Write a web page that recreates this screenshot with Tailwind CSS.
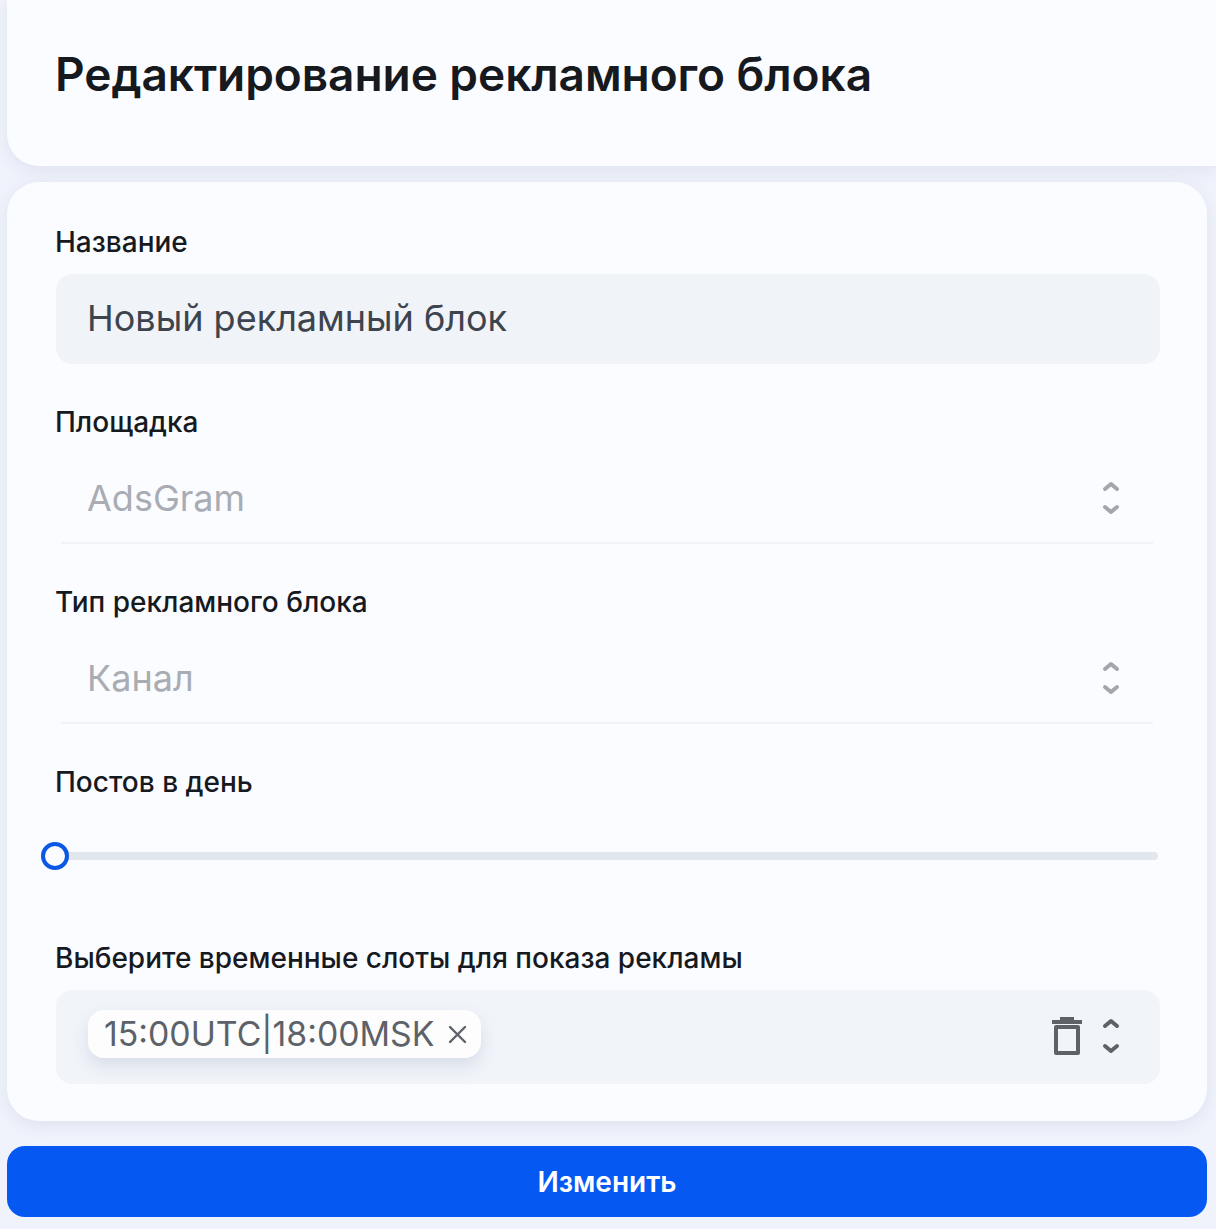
<!DOCTYPE html>
<html lang="ru">
<head>
    <meta charset="UTF-8">
    <meta name="viewport" content="width=device-width, initial-scale=1.0">
    <title>Редактирование рекламного блока</title>
    <script src="https://cdn.jsdelivr.net/npm/@tailwindcss/browser@4"></script>
</head>
<body class="bg-[#f0f3fb] font-['Inter',sans-serif] h-[1229px] overflow-hidden">
    <main class="pl-[7px] flex flex-col">
        <!-- header -->
        <div class="h-[166px] bg-[#fbfcff] rounded-bl-[32px] pl-[48px] pt-[44px] shadow-[0_4px_16px_rgba(170,180,210,0.25)]">
            <h1 class="text-[46px] leading-[60px] font-semibold text-[#16191d] tracking-[-0.06px]">Редактирование рекламного блока</h1>
        </div>

        <!-- form card -->
        <div class="mt-[16px] w-[1200px] h-[939px] bg-[#fbfcff] rounded-[32px] px-[49px] pt-[42px] shadow-[0_4px_16px_rgba(170,180,210,0.25)]">
            <label class="block -ml-[1px] text-[28px] leading-[36px] font-medium text-[#16191d] h-[50px]">Название</label>
            <div class="w-[1104px] h-[90px] rounded-[16px] bg-[#f0f3f8] pl-[31px] pb-[2px] flex items-center text-[36px] text-[#3d444d]">Новый рекламный блок</div>

            <label class="block -ml-[1px] mt-[40px] text-[28px] leading-[36px] font-medium text-[#16191d] h-[50px]">Площадка</label>
            <div class="w-[1104px] h-[88px] pl-[31px] pr-[29px] flex items-center justify-between text-[36px] text-[#a9adb3]">
                <span>AdsGram</span>
                <svg class="w-[40px] h-[40px]" viewBox="0 0 40 40" fill="none" stroke="#a3a6ac" stroke-width="4" stroke-linecap="round" stroke-linejoin="round"><path d="M14 11l6-5 6 5"/><path d="M14 29l6 5 6-5"/></svg>
            </div>
            <div class="h-[2px] mx-[5px] bg-[#f0f2f6]"></div>

            <label class="block -ml-[1px] mt-[40px] text-[28px] leading-[36px] font-medium text-[#16191d] h-[50px]">Тип рекламного блока</label>
            <div class="w-[1104px] h-[88px] pl-[31px] pr-[29px] flex items-center justify-between text-[36px] text-[#a9adb3]">
                <span>Канал</span>
                <svg class="w-[40px] h-[40px]" viewBox="0 0 40 40" fill="none" stroke="#a3a6ac" stroke-width="4" stroke-linecap="round" stroke-linejoin="round"><path d="M14 11l6-5 6 5"/><path d="M14 29l6 5 6-5"/></svg>
            </div>
            <div class="h-[2px] mx-[5px] bg-[#f0f2f6]"></div>

            <label class="block -ml-[1px] mt-[40px] text-[28px] leading-[36px] font-medium text-[#16191d] h-[50px]">Постов в день</label>
            <div class="relative w-[1104px] h-[84px] flex items-center">
                <div class="w-[1102px] h-[8px] rounded-full bg-[#e2e7ed]"></div>
                <div class="absolute left-[-15px] top-[28px] w-[28px] h-[28px] rounded-full border-[4px] border-[#0a58e6] bg-[#fbfcff]"></div>
            </div>

            <label class="block -ml-[1px] mt-[42px] text-[28px] leading-[36px] font-medium text-[#16191d] h-[50px]">Выберите временные слоты для показа рекламы</label>
            <div class="w-[1104px] h-[94px] rounded-[16px] bg-[#f1f4f9] pl-[32px] pr-[39px] flex items-start justify-between">
                <div class="mt-[20px] w-[393px] h-[48px] rounded-[16px] bg-[#fdfdfe] pl-[16px] flex items-center text-[33.8px] text-[#5d6269] shadow-[0_8px_16px_rgba(170,180,210,0.35)]">
                    <span>15:00UTC|18:00MSK</span>
                    <svg class="ml-[13px] w-[19px] h-[19px]" viewBox="0 0 19 19" fill="none" stroke="#5d6269" stroke-width="2.4" stroke-linecap="round"><path d="M2 2l15 15"/><path d="M17 2L2 17"/></svg>
                </div>
                <div class="flex items-center gap-[19px] mt-[26px]">
                    <svg class="w-[30px] h-[40px]" viewBox="0 0 30 40" fill="none" stroke="#5d6269" stroke-width="4" stroke-linejoin="round"><path d="M0 6h30"/><path d="M8 3h14" stroke-width="4"/><path d="M4 11h22v26H4z"/></svg>
                    <svg class="w-[20px] h-[40px]" viewBox="10 0 20 40" fill="none" stroke="#5d6269" stroke-width="4" stroke-linecap="round" stroke-linejoin="round"><path d="M14 10l6-5 6 5"/><path d="M14 30l6 5 6-5"/></svg>
                </div>
            </div>
        </div>

        <button class="mt-[25px] w-[1200px] h-[71px] rounded-[18px] bg-[#0558f2] text-white text-[28px] font-semibold">Изменить</button>
    </main>
</body>
</html>
